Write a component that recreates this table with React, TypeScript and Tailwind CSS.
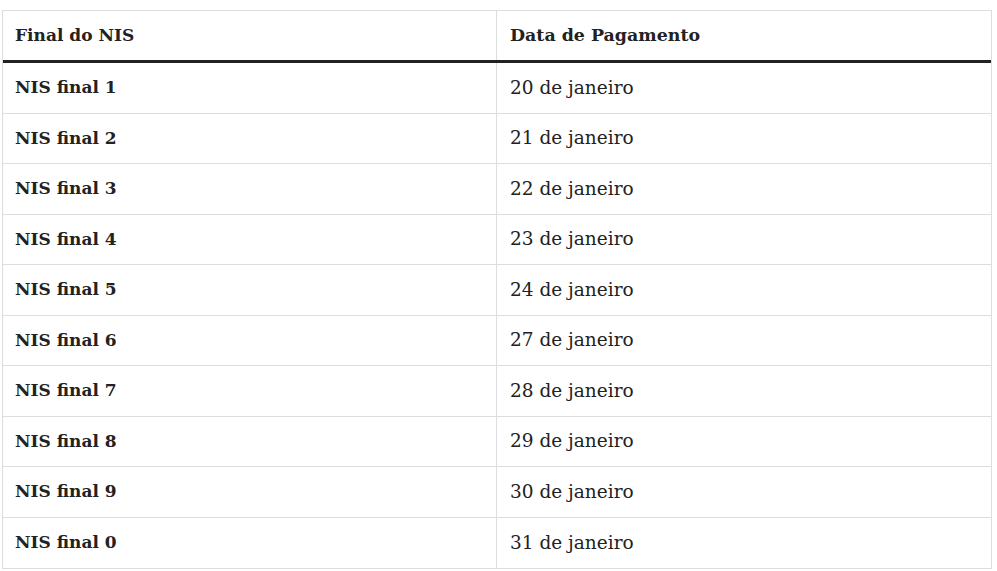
import React from 'react';

const rows = [
  { nis: '1', date: '20 de janeiro' },
  { nis: '2', date: '21 de janeiro' },
  { nis: '3', date: '22 de janeiro' },
  { nis: '4', date: '23 de janeiro' },
  { nis: '5', date: '24 de janeiro' },
  { nis: '6', date: '27 de janeiro' },
  { nis: '7', date: '28 de janeiro' },
  { nis: '8', date: '29 de janeiro' },
  { nis: '9', date: '30 de janeiro' },
  { nis: '0', date: '31 de janeiro' },
];

const App: React.FC = () => {
  return (
    <div className="min-h-screen bg-white pt-[10px] pl-[2px] text-[#222] font-['DejaVu_Serif',serif] text-[17px]">
      <div className="w-[990px] border border-[#dddddd]">
        {/* header */}
        <div className="grid grid-cols-[493px_1fr] h-[52px] border-b-[3px] border-b-[#222]">
          <div className="flex items-center px-3 font-bold">Final do NIS</div>
          <div className="flex items-center pl-[13px] pr-3 font-bold border-l border-[#dddddd] text-[17.4px]">Data de Pagamento</div>
        </div>
        {rows.map((r, i) => (
          <div
            key={r.nis}
            className={`grid grid-cols-[493px_1fr] h-[50.5px] ${i < rows.length - 1 ? 'border-b border-[#dddddd]' : ''}`}
          >
            <div className="flex items-center px-3 font-bold">NIS final {r.nis}</div>
            <div className="flex items-center pl-[13px] pr-3 border-l border-[#dddddd] text-[18.5px]">{r.date}</div>
          </div>
        ))}
      </div>
    </div>
  );
};

export default App;
